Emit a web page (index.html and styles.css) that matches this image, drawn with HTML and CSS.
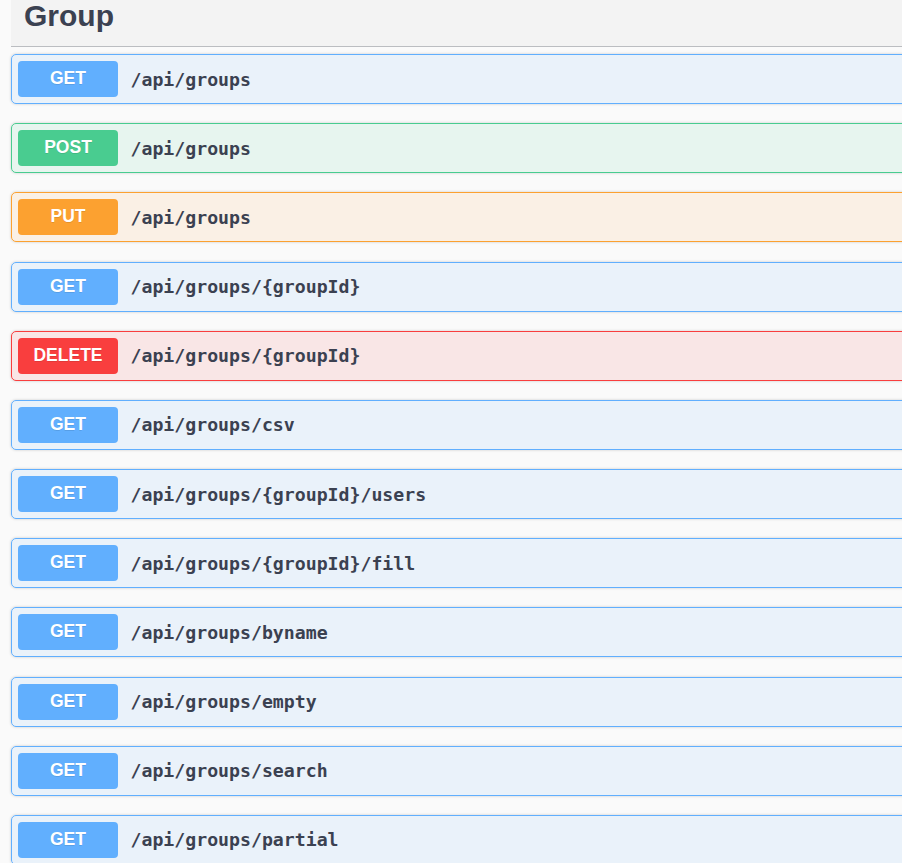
FILE: index.html
```html
<!DOCTYPE html>
<html lang="en">
<head>
<meta charset="utf-8">
<title>Group</title>
<link rel="stylesheet" href="styles.css">
</head>
<body>
<div class="section">
  <h3 class="tag">Group</h3>
  <div class="ops">
    <div class="op get"><span class="method">GET</span><span class="path">/api/groups</span></div>
    <div class="op post"><span class="method">POST</span><span class="path">/api/groups</span></div>
    <div class="op put"><span class="method">PUT</span><span class="path">/api/groups</span></div>
    <div class="op get"><span class="method">GET</span><span class="path">/api/groups/{groupId}</span></div>
    <div class="op delete"><span class="method">DELETE</span><span class="path">/api/groups/{groupId}</span></div>
    <div class="op get"><span class="method">GET</span><span class="path">/api/groups/csv</span></div>
    <div class="op get"><span class="method">GET</span><span class="path">/api/groups/{groupId}/users</span></div>
    <div class="op get"><span class="method">GET</span><span class="path">/api/groups/{groupId}/fill</span></div>
    <div class="op get"><span class="method">GET</span><span class="path">/api/groups/byname</span></div>
    <div class="op get"><span class="method">GET</span><span class="path">/api/groups/empty</span></div>
    <div class="op get"><span class="method">GET</span><span class="path">/api/groups/search</span></div>
    <div class="op get"><span class="method">GET</span><span class="path">/api/groups/partial</span></div>
  </div>
</div>
</body>
</html>
```
FILE: styles.css
```css
html, body {
  margin: 0;
  padding: 0;
  background: #fafafa;
  overflow: hidden;
}
body {
  font-family: "Liberation Sans", Arial, sans-serif;
  color: #3b4151;
}
.section {
  width: 1100px;
  margin: -1px 0 0 11px;
}
.tag {
  margin: 0 0 7px 0;
  padding: 0 20px 12.5px 13px;
  font-size: 30px;
  font-weight: 700;
  line-height: 34.5px;
  color: #3b4151;
  background: #f3f3f3;
  border-bottom: 1px solid rgba(59, 65, 81, 0.3);
}
.ops {
  display: flex;
  flex-direction: column;
}
.op {
  display: flex;
  align-items: center;
  box-sizing: border-box;
  height: 50px;
  margin-bottom: 19.18px;
  padding: 6px;
  border: 1px solid #61affe;
  border-radius: 5px;
  box-shadow: 0 0 3px rgba(0, 0, 0, 0.19);
}
.method {
  box-sizing: border-box;
  width: 100px;
  height: 36px;
  line-height: 35px;
  border-radius: 4px;
  text-align: center;
  font-family: "Liberation Sans", Arial, sans-serif;
  font-size: 17.5px;
  font-weight: 700;
  color: #fff;
  text-shadow: 0 1px 0 rgba(0, 0, 0, 0.1);
  background: #61affe;
}
.path {
  padding: 0 12.5px;
  font-family: "DejaVu Sans Mono", "Liberation Mono", monospace;
  font-size: 18.2px;
  font-weight: 700;
  color: #3b4151;
}
.get { background: rgba(97, 175, 254, 0.1); border-color: #61affe; }
.get .method { background: #61affe; }
.post { background: rgba(73, 204, 144, 0.1); border-color: #49cc90; }
.post .method { background: #49cc90; }
.put { background: rgba(252, 161, 48, 0.1); border-color: #fca130; }
.put .method { background: #fca130; }
.delete { background: rgba(249, 62, 62, 0.1); border-color: #f93e3e; }
.delete .method { background: #f93e3e; }
```
